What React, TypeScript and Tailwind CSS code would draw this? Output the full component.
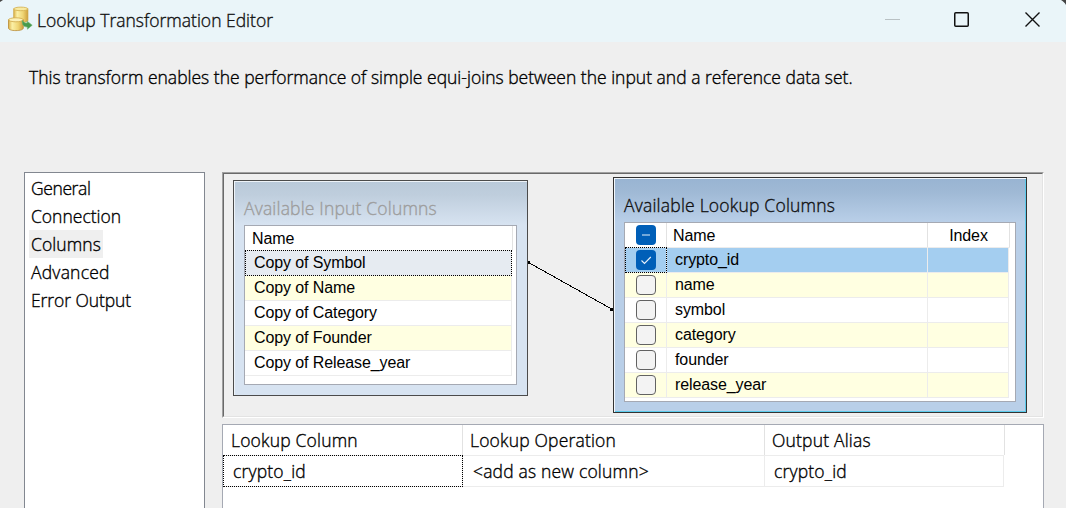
import { clsx } from "clsx";
import type { ReactNode } from "react";

const ui = "font-['Open_Sans',sans-serif] font-light text-[17.5px] whitespace-nowrap [-webkit-text-stroke:0.35px_currentColor]";
const grid = "font-['Liberation_Sans',sans-serif] text-[16px] tracking-[-0.1px] whitespace-nowrap";

function DatabaseIcon() {
  return (
    <svg width="26" height="26" viewBox="0 0 26 26" className="shrink-0">
      <defs>
        <linearGradient id="gold" x1="0" x2="1" y1="0" y2="0">
          <stop offset="0" stopColor="#dcb24a" />
          <stop offset="0.25" stopColor="#fbf0a6" />
          <stop offset="0.65" stopColor="#efd574" />
          <stop offset="1" stopColor="#cfa03c" />
        </linearGradient>
      </defs>
      <path d="M6.700 2.800v11.500c0 1.400 3 2.300 7.100 2.300s7.100-.9 7.100-2.300V2.800z" fill="url(#gold)" stroke="#c99f3a" strokeWidth="0.7" />
      <ellipse cx="13.800" cy="2.900" rx="7.100" ry="1.800" fill="#f8eaa2" stroke="#d2ad4a" strokeWidth="0.8" />
      <path d="M1.500 13.800v8.300c0 1.500 3.200 2.500 7.400 2.500s7.400-1 7.400-2.500v-8.300z" fill="url(#gold)" stroke="#b98a31" strokeWidth="0.8" />
      <ellipse cx="8.900" cy="13.800" rx="7.400" ry="2" fill="#fbf1b8" stroke="#cfa746" strokeWidth="0.8" />
      <path d="M15.200 14.300c1.300 2 2.500 2.900 5 2.800v-1.900l5 4-4.800 4v-2.200c-3.600.1-5.500-2-5.200-6.700z" fill="#479a4d" stroke="#6fb573" strokeWidth="0.6" />
    </svg>
  );
}

function TitleBar() {
  return (
    <header className="relative flex h-[42px] shrink-0 items-start bg-[#eaf5f9] pl-[7px]">
      <svg width="4" height="4" className="absolute left-0 top-0"><path d="M0 0h3L0 2z" fill="#444" /></svg>
      <svg width="6" height="6" className="absolute right-0 top-0"><path d="M1 0h5v5C5 3 3 1 1 0z" fill="#444" /></svg>
      <div className="pt-[6px]"><DatabaseIcon /></div>
      <h1 className={clsx(ui, "ml-[4px] grow leading-[40px] text-[#111]")}>Lookup Transformation Editor</h1>
      <svg width="181" height="42" viewBox="0 0 181 42" fill="none">
        <path d="M0 19.500h15" stroke="#b9c1c4" />
        <rect x="69.750" y="12.750" width="13.500" height="13.500" rx="1" stroke="#111" strokeWidth="1.500" />
        <path d="M140.500 12.500l14 14M154.500 12.500l-14 14" stroke="#111" strokeWidth="1.400" />
      </svg>
    </header>
  );
}

const pages = [
  { label: "General", tracking: "tracking-[-0.4px]" },
  { label: "Connection", tracking: "tracking-normal" },
  { label: "Columns", tracking: "tracking-[0.08px]" },
  { label: "Advanced", tracking: "tracking-[0.22px]" },
  { label: "Error Output", tracking: "tracking-[-0.08px]" },
];

function PageList() {
  return (
    <nav className="flex w-[181px] flex-col items-start border border-b-0 border-[#828790] bg-white pl-[4px] pt-px">
      {pages.map(({ label, tracking }) => (
        <div key={label} className={clsx(ui, tracking, "h-[28px] px-[2px] leading-[29px]", label === "Columns" && "bg-[#efefef]")}>
          {label}
        </div>
      ))}
    </nav>
  );
}

function FocusFrame() {
  return <span className="absolute -right-px -top-px bottom-[-1px] left-0 border border-dotted border-black" />;
}

type Mark = "mixed" | "checked" | "empty";

function CheckBox({ mark }: { mark: Mark }) {
  return (
    <svg width="20" height="20" viewBox="0 0 20 20" fill="none" className="block">
      {mark === "empty" ? (
        <rect x="0.500" y="0.500" width="19" height="19" rx="3.500" fill="#f3f3f3" stroke="#626262" />
      ) : (
        <rect width="20" height="20" rx="4" fill="#005fb8" />
      )}
      {mark === "mixed" && <path d="M6 10h8" stroke="#8fbbe2" strokeWidth="1.600" />}
      {mark === "checked" && <path d="M5.500 10.500l3 3 6.300-6.500" stroke="#e8f1fa" strokeWidth="1.100" />}
    </svg>
  );
}

const inputColumns = ["Copy of Symbol", "Copy of Name", "Copy of Category", "Copy of Founder", "Copy of Release_year"];
const lookupColumns = ["crypto_id", "name", "symbol", "category", "founder", "release_year"];

function InputWindow() {
  return (
    <section className="absolute left-[9px] top-[6px] flex h-[216px] w-[295px] flex-col border border-[#4b4b4b] bg-[linear-gradient(#b9c9d9_0px,#bfcedd_14px,#d7e3f1_44px)] px-[10px] pb-[10px] shadow-[inset_1px_1px_0_#eef3f8]">
      <h2 className={clsx(ui, "h-[44px] shrink-0 pt-[12px] leading-[30px] tracking-[0.18px] text-[#9d9d9d]")}>Available Input Columns</h2>
      <div className="flex h-[160px] flex-col border border-[#a5a9b3] bg-white">
        <div className={clsx(grid, "h-[24px] w-[268px] border-r border-[#e2e2e2] pl-[7px] leading-[25px]")}>Name</div>
        <div className="h-px w-[268px] bg-[#ececec]" />
        {inputColumns.map((c, i) => (
          <div
            key={c}
            className={clsx(
              grid,
              "relative h-[25px] w-[267px] border-b border-r border-[#ececec] pl-[9px] leading-[24px]",
              i === 0 ? "bg-[#e6ebf1]" : i % 2 ? "bg-[#ffffe1]" : "bg-white",
            )}
          >
            {c}
            {i === 0 && <FocusFrame />}
          </div>
        ))}
      </div>
    </section>
  );
}

function LookupWindow() {
  return (
    <section className="absolute left-[389px] top-[3px] flex h-[236px] w-[414px] flex-col border border-[#333] bg-[linear-gradient(#98b4d2_0px,#9fb9d5_14px,#b9cfe8_44px)] px-[10px] pb-[10px] shadow-[inset_1px_1px_0_#f2f7fc,inset_-1px_-1px_0_#5ccbec]">
      <h2 className={clsx(ui, "h-[44px] shrink-0 pt-[12px] leading-[30px] tracking-[0.21px] text-[#111]")}>Available Lookup Columns</h2>
      <div className="flex h-[180px] flex-col border border-[#a5a9b3] bg-white">
        <div className={clsx(grid, "flex h-[24px] leading-[25px]")}>
          <div className="w-[42px] border-r border-[#e2e2e2] pl-[11px] pt-[2px]"><CheckBox mark="mixed" /></div>
          <div className="w-[261px] border-r border-[#e2e2e2] pl-[6px]">Name</div>
          <div className="w-[82px] border-r border-[#e2e2e2] text-center">Index</div>
        </div>
        <div className="h-px w-[385px] bg-[#ececec]" />
        {lookupColumns.map((c, i) => (
          <div key={c} className={clsx(grid, "flex h-[25px] w-[384px] leading-[24px]", i === 0 ? "bg-[#a4cef0]" : i % 2 ? "bg-[#ffffe1]" : "bg-white")}>
            <div className="relative w-[42px] border-b border-r border-[#ececec] pl-[11px] pt-[2px]">
              <CheckBox mark={i === 0 ? "checked" : "empty"} />
              {i === 0 && <FocusFrame />}
            </div>
            <div className="w-[261px] border-b border-r border-[#ececec] pl-[8px]">{c}</div>
            <div className="w-[81px] border-b border-r border-[#ececec]" />
          </div>
        ))}
      </div>
    </section>
  );
}

function MappingCanvas() {
  return (
    <div className="h-[246px] border border-b-white border-l-[#a0a0a0] border-r-white border-t-[#a0a0a0]">
      <div className="relative h-full border border-b-[#e3e3e3] border-l-[#696969] border-r-[#e3e3e3] border-t-[#696969]">
        <svg width="100" height="60" className="absolute left-[300px] top-[80px]" shapeRendering="crispEdges">
          <path d="M4.500 8.500l84 47" stroke="#000" />
          <path d="M4 7h2v3H4zM86 54h3v3h-3z" fill="#000" />
        </svg>
        <InputWindow />
        <LookupWindow />
      </div>
    </div>
  );
}

function Cell({ className, children }: { className?: string; children?: ReactNode }) {
  return <div className={clsx("relative border-r", className)}>{children}</div>;
}

function OutputTable() {
  return (
    <div className={clsx(ui, "mt-[6px] grow border border-b-0 border-[#a5a9b3] bg-white tracking-[0.18px]")}>
      <div className="flex h-[30px] leading-[31px]">
        <Cell className="w-[240px] border-[#e2e2e2] pl-[8px]">Lookup Column</Cell>
        <Cell className="w-[302px] border-[#e2e2e2] pl-[7px]">Lookup Operation</Cell>
        <Cell className="w-[240px] border-[#e2e2e2] pl-[7px]">Output Alias</Cell>
      </div>
      <div className="h-px w-[781px] bg-[#ececec]" />
      <div className="flex h-[31px] leading-[31px]">
        <Cell className="w-[240px] border-b border-[#ececec] pl-[10px]">
          crypto_id
          <FocusFrame />
        </Cell>
        <Cell className="w-[302px] border-b border-[#ececec] pl-[10px]">&lt;add as new column&gt;</Cell>
        <Cell className="w-[239px] border-b border-[#ececec] pl-[9px]">crypto_id</Cell>
      </div>
    </div>
  );
}

export default function App() {
  return (
    <div className="flex h-[508px] w-[1066px] flex-col overflow-hidden bg-[#efefef] text-black">
      <TitleBar />
      <p className={clsx(ui, "h-[130px] shrink-0 pl-[29px] pt-[20px] leading-[31px]")}>
        This transform enables the performance of simple equi-joins between the input and a reference data set.
      </p>
      <main className="flex grow pl-[24px]">
        <PageList />
        <div className="ml-[17px] flex w-[822px] flex-col">
          <MappingCanvas />
          <OutputTable />
        </div>
      </main>
    </div>
  );
}
